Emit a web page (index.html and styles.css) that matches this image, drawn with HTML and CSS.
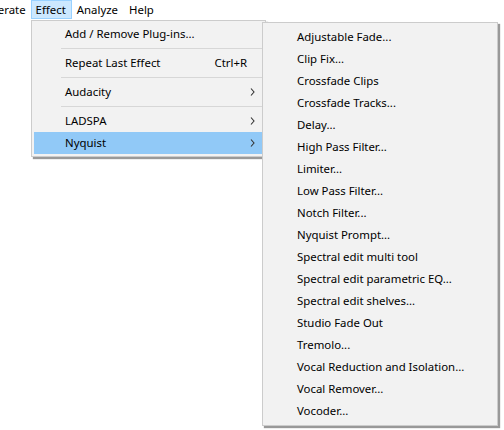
FILE: index.html
```html
<!DOCTYPE html>
<html>
<head>
<meta charset="utf-8">
<link rel="stylesheet" href="styles.css">
</head>
<body>
<div class="menubar">
  <span class="mb-item mb-gen">Generate</span>
  <span class="mb-item mb-active">Effect</span>
  <span class="mb-item">Analyze</span>
  <span class="mb-item">Help</span>
</div>
<div class="menu main-menu">
  <div class="mi">Add / Remove Plug-ins...</div>
  <div class="sep"></div>
  <div class="mi"><span class="lbl">Repeat Last Effect</span><span class="sc">Ctrl+R</span></div>
  <div class="sep"></div>
  <div class="mi"><span class="lbl">Audacity</span><svg class="arr" width="5" height="8" viewBox="0 0 5 8"><path d="M1 0.5 L4 4 L1 7.5" fill="none" stroke="#333" stroke-width="1.1"/></svg></div>
  <div class="sep"></div>
  <div class="mi"><span class="lbl">LADSPA</span><svg class="arr" width="5" height="8" viewBox="0 0 5 8"><path d="M1 0.5 L4 4 L1 7.5" fill="none" stroke="#333" stroke-width="1.1"/></svg></div>
  <div class="mi hl"><span class="lbl">Nyquist</span><svg class="arr" width="5" height="8" viewBox="0 0 5 8"><path d="M1 0.5 L4 4 L1 7.5" fill="none" stroke="#333" stroke-width="1.1"/></svg></div>
</div>
<div class="menu sub-menu">
  <div class="mi">Adjustable Fade...</div>
  <div class="mi">Clip Fix...</div>
  <div class="mi">Crossfade Clips</div>
  <div class="mi">Crossfade Tracks...</div>
  <div class="mi">Delay...</div>
  <div class="mi">High Pass Filter...</div>
  <div class="mi">Limiter...</div>
  <div class="mi">Low Pass Filter...</div>
  <div class="mi">Notch Filter...</div>
  <div class="mi">Nyquist Prompt...</div>
  <div class="mi">Spectral edit multi tool</div>
  <div class="mi">Spectral edit parametric EQ...</div>
  <div class="mi">Spectral edit shelves...</div>
  <div class="mi">Studio Fade Out</div>
  <div class="mi">Tremolo...</div>
  <div class="mi">Vocal Reduction and Isolation...</div>
  <div class="mi">Vocal Remover...</div>
  <div class="mi">Vocoder...</div>
</div>
</body>
</html>
```
FILE: styles.css
```css
html, body {
  margin: 0;
  padding: 0;
  background: #ffffff;
}
body {
  font-family: "Noto Sans", "Open Sans", sans-serif;
  font-size: 11.4px;
  color: #000;
  overflow: hidden;
  width: 504px;
  height: 430px;
  position: relative;
}
.menubar {
  display: flex;
  height: 20px;
  align-items: stretch;
  margin-left: -29px;
  white-space: nowrap;
}
.mb-item {
  display: flex;
  align-items: center;
  padding: 0 5px 0 4px;
  border: 1px solid transparent;
  line-height: 18px;
  box-sizing: border-box;
  height: 19px;
}
.mb-gen {
  padding-right: 4px;
}
.mb-active {
  background: #cce8ff;
  border-color: #99d1ff;
}
.menu {
  position: absolute;
  background: #f2f2f2;
  border: 1px solid #cccccc;
  box-sizing: border-box;
  padding: 2px;
  box-shadow: 2px 2px 1px rgba(0,0,0,0.4);
}
.main-menu {
  left: 31px;
  top: 20px;
  width: 235px;
}
.sub-menu {
  left: 262px;
  top: 22px;
  width: 236px;
  padding: 3px 3px 3px 3px;
}
.mi {
  height: 22px;
  line-height: 22px;
  padding-left: 31px;
  display: flex;
  align-items: center;
  white-space: nowrap;
  position: relative;
}
.lbl {
  flex: 1;
}
.sc {
  margin-right: 16px;
}
.arr {
  margin-right: 8px;
}
.hl {
  background: #91c9f7;
}
.sep {
  height: 7px;
  margin-left: 27px;
  display: flex;
  align-items: center;
}
.sep::before {
  content: "";
  display: block;
  height: 1px;
  width: 100%;
  background: #d7d7d7;
}
```
